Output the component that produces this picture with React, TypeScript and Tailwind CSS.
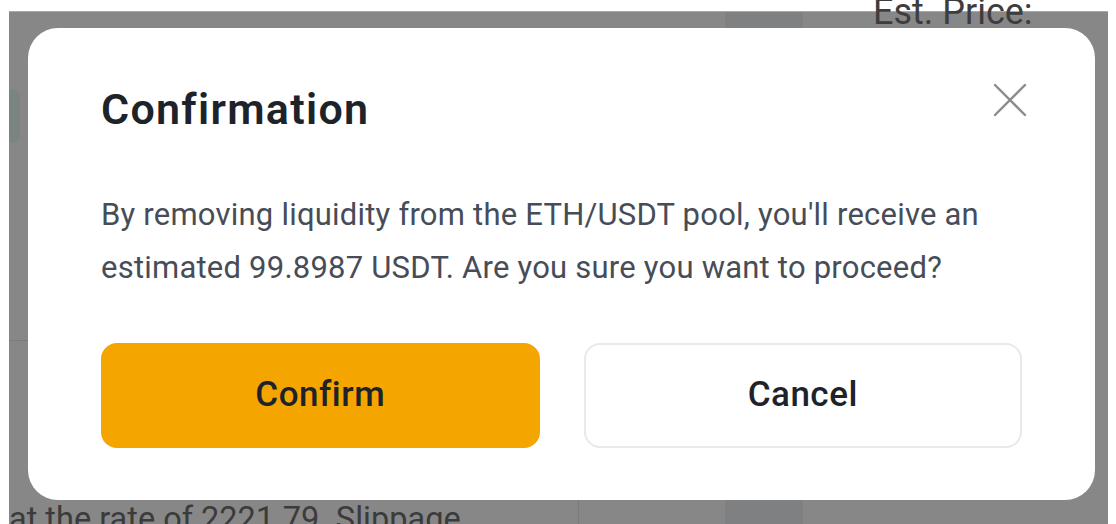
export default function App() {
  return (
    <div className="w-[1116px] h-[524px] bg-white pl-[9px] pr-[8px] pt-[11px] font-['Roboto',sans-serif] overflow-hidden">
      <div className="relative h-full bg-[#878787] border-t border-[#a9a9a9] pl-[19px] pr-[13px] pt-[16px]">
        {/* page behind the overlay */}
        <div className="absolute top-0 bottom-0 left-[716px] w-[78px] bg-[#7f8081]" />
        <div className="absolute bottom-0 h-[40px] left-[569px] w-px bg-[#7a7a7a]" />
        <div className="absolute left-0 top-[78px] w-[11px] h-[52px] rounded-r-md bg-[#7b857f]" />
        <div className="absolute left-0 top-[328px] w-[19px] h-px bg-[#767b80]" />
        <div className="absolute -top-[22px] left-[864px] text-[36px] leading-[44px] text-[#3d3d3d]">Est. Price:</div>
        <div className="absolute -bottom-[15px] left-0 text-[32.5px] leading-[40px] text-[#3b3b3b] whitespace-nowrap">at the rate of 2221.79. Slippage</div>

        {/* modal */}
        <div className="relative bg-white rounded-[30px] px-[73px] pt-[53px] pb-[52px]">
          <div className="flex items-start justify-between">
            <h2 className="text-[43px] leading-[56px] tracking-[1.3px] font-semibold text-[#1e2329]">Confirmation</h2>
            <button className="mt-[2px] -mr-[5px] text-[#8b8b8b]">
              <svg width="34" height="34" viewBox="0 0 34 34" fill="none" stroke="currentColor" strokeWidth="2.4" strokeLinecap="round">
                <path d="M2 2L32 32M32 2L2 32" />
              </svg>
            </button>
          </div>
          <p className="mt-[51px] text-[31px] leading-[53px] tracking-[0.22px] text-[#474d57]">
            By removing liquidity from the ETH/USDT pool, you'll receive an
            <br />
            estimated 99.8987 USDT. Are you sure you want to proceed?
          </p>
          <div className="mt-[49px] grid grid-cols-2 gap-[44px]">
            <button className="h-[105px] rounded-[16px] bg-[#f5a500] text-[35px] font-medium tracking-[0.5px] text-[#1e2329]">Confirm</button>
            <button className="h-[105px] rounded-[16px] border-2 border-[#e9e9e9] bg-white text-[35px] font-medium tracking-[0.5px] text-[#1e2329]">Cancel</button>
          </div>
        </div>
      </div>
    </div>
  )
}
